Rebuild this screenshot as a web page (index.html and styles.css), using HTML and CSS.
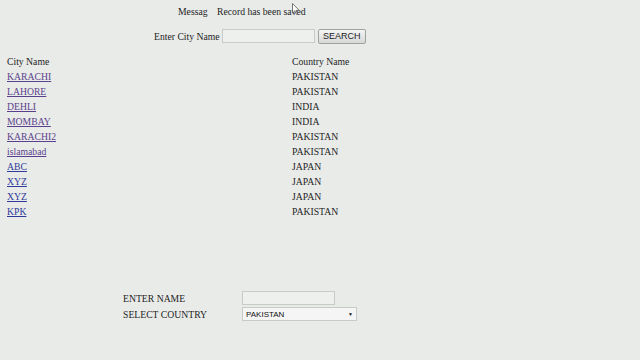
FILE: index.html
```html
<!DOCTYPE html>
<html lang="en">
    <head>
        <meta charset="UTF-8">
        <title>City List</title>
        <link rel="stylesheet" href="styles.css">
    </head>
    <body>
        <div class="msg">
            <span class="msg-label">Messag</span>
            <span>Record has been saved</span>
        </div>

        <div class="search">
            <span>Enter City Name</span>
            <input type="text" class="search-box">
            <button class="search-btn">SEARCH</button>
        </div>

        <table class="grid">
            <tr><th>City Name</th><th>Country Name</th></tr>
            <tr><td><a class="seen" href="#">KARACHI</a></td><td>PAKISTAN</td></tr>
            <tr><td><a class="seen" href="#">LAHORE</a></td><td>PAKISTAN</td></tr>
            <tr><td><a class="seen" href="#">DEHLI</a></td><td>INDIA</td></tr>
            <tr><td><a class="seen" href="#">MOMBAY</a></td><td>INDIA</td></tr>
            <tr><td><a class="seen" href="#">KARACHI2</a></td><td>PAKISTAN</td></tr>
            <tr><td><a class="seen" href="#">islamabad</a></td><td>PAKISTAN</td></tr>
            <tr><td><a href="#">ABC</a></td><td>JAPAN</td></tr>
            <tr><td><a href="#">XYZ</a></td><td>JAPAN</td></tr>
            <tr><td><a href="#">XYZ</a></td><td>JAPAN</td></tr>
            <tr><td><a href="#">KPK</a></td><td>PAKISTAN</td></tr>
        </table>

        <div class="entry">
            <div class="entry-row">
                <span class="entry-label">ENTER NAME</span>
                <input type="text" class="name-box">
            </div>
            <div class="entry-row">
                <span class="entry-label">SELECT COUNTRY</span>
                <div class="select">
                    <span>PAKISTAN</span>
                    <span class="arrow">&#9660;</span>
                </div>
            </div>
        </div>

        <!-- mouse pointer caught in the screenshot -->
        <svg class="cursor" width="8" height="12" viewBox="0 0 8 12">
            <path d="M0.5 0.5 L0.5 10 L2.8 7.8 L4.4 11.3 L5.6 10.8 L4 7.4 L7.2 7.4 Z"
                fill="#fff" stroke="#555" stroke-width="0.8"/>
        </svg>
    </body>
</html>
```

FILE: styles.css
```css
body {
    margin: 0;
    background: #e9ebe9;
    font-family: "Liberation Serif", "Times New Roman", serif;
    font-size: 9.7px;
    color: #1e1e1e;
}
.msg {
    padding: 5px 0 0 178px;
    line-height: 14px;
}
.msg-label { margin-right: 7px; }

.search {
    display: flex;
    align-items: center;
    padding-left: 154px;
    margin-top: 9px;
    height: 16px;
}
.search-box {
    width: 93px;
    height: 14px;
    margin: 0 3px 0 2px;
    padding: 0;
    border: 1px solid #c9cbc9;
    background: #eef0ee;
    box-sizing: border-box;
}
.search-btn {
    height: 15px;
    width: 48px;
    padding: 0;
    font-family: "Liberation Sans", Arial, sans-serif;
    font-size: 9px;
    color: #222;
    border: 1px solid #a0a2a0;
    border-radius: 2px;
    background: linear-gradient(#f4f4f4, #d8d8d8);
}

.grid {
    border-collapse: collapse;
    margin: 10px 0 0 5px;
}
.grid th, .grid td {
    padding: 0 2px;
    height: 15px;
    line-height: 15px;
    text-align: left;
    font-weight: normal;
}
.grid th:first-child, .grid td:first-child { width: 281px; }
.grid a { color: #2f3a9a; }
.grid a.seen { color: #5a3f8c; }

.entry {
    margin-top: 71px;
    padding-left: 123px;
}
.entry-row {
    display: flex;
    align-items: center;
    height: 16px;
}
.entry-label { width: 119px; }
.name-box {
    width: 93px;
    height: 14px;
    padding: 0;
    border: 1px solid #c9cbc9;
    background: #eef0ee;
    box-sizing: border-box;
}
.select {
    display: flex;
    justify-content: space-between;
    align-items: center;
    width: 115px;
    height: 14px;
    padding: 0 3px;
    box-sizing: border-box;
    border: 1px solid #c9cbc9;
    background: #f4f5f4;
    color: #111;
    font-family: "Liberation Sans", Arial, sans-serif;
    font-size: 8px;
}
.arrow { font-size: 5px; }

.cursor {
    position: absolute;
    left: 292px;
    top: 3px;
}
```
